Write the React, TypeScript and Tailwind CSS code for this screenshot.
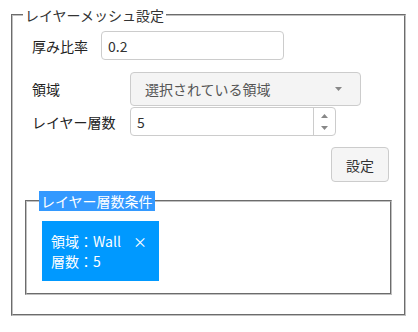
import React from "react";

const font = { fontFamily: '"Noto Sans CJK JP", "Noto Sans", sans-serif' };

const Caret: React.FC<{ up?: boolean }> = ({ up }) => (
  <svg width="7" height="4" viewBox="0 0 7 4" className="block">
    {up ? (
      <polygon points="0,4 7,4 3.5,0" fill="#888" />
    ) : (
      <polygon points="0,0 7,0 3.5,4" fill="#888" />
    )}
  </svg>
);

const App: React.FC = () => {
  return (
    <div
      className="w-[418px] h-[332px] bg-white text-[14px] leading-[20px] text-[#222] pt-[5px]"
      style={font}
    >
      <fieldset className="ml-[11px] w-[395px] min-w-0 border-2 [border-style:groove] border-[#c0c0c0] pl-[10px] pr-[12px] pb-[19px]">
        <legend className="px-[2px] text-[#333]">レイヤーメッシュ設定</legend>

        <div className="flex items-center mt-[6px] ml-[9px]">
          <span className="w-[69px]">厚み比率</span>
          <div className="w-[183px] h-[29px] border border-[#ccc] rounded-[4px] flex items-center pl-[6px] text-[#333]">
            0.2
          </div>
        </div>

        <div className="flex items-center mt-[12px] ml-[9px]">
          <span className="w-[98px]">領域</span>
          <div className="w-[231px] h-[34px] border border-[#ccc] rounded-[4px] bg-[#f4f4f4] flex items-center justify-between pl-[14px] pr-[18px] text-[#555]">
            <span>選択されている領域</span>
            <Caret />
          </div>
        </div>

        <div className="flex items-center mt-[1px] ml-[9px]">
          <span className="w-[98px]">レイヤー層数</span>
          <div className="w-[206px] h-[29px] border border-[#ccc] rounded-[4px] flex items-stretch text-[#333]">
            <span className="flex-1 flex items-center pl-[6px]">5</span>
            <div className="w-[22px] border-l border-[#ccc] flex flex-col items-center justify-center gap-[8px]">
              <Caret up />
              <Caret />
            </div>
          </div>
        </div>

        <div className="flex justify-end mt-[11px] mr-[3px]">
          <button className="w-[58px] h-[35px] border border-[#ccc] rounded-[4px] bg-[#f5f5f5] text-[#333]">
            設定
          </button>
        </div>

        <fieldset className="ml-[2px] mt-[9px] min-w-0 border-2 [border-style:groove] border-[#c0c0c0] pl-[12px] pb-[12px]">
          <legend className="px-[2px] bg-[#3399ff] text-white">レイヤー層数条件</legend>
          <div className="ml-[3px] mt-[10px] w-[117px] bg-[#0099ff] text-white px-[9px] py-[10px]">
            <div>
              領域：Wall<span className="ml-[12px]">×</span>
            </div>
            <div>層数：5</div>
          </div>
        </fieldset>
      </fieldset>
    </div>
  );
};

export default App;
